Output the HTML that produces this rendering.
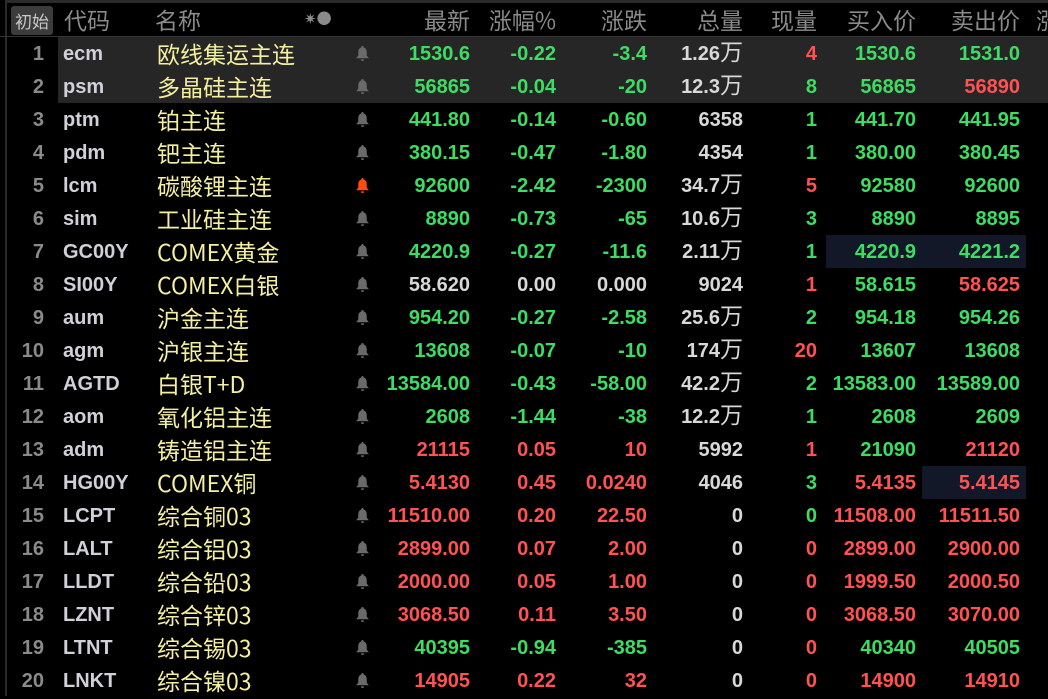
<!DOCTYPE html>
<html><head><meta charset="utf-8"><style>
body{margin:0;width:1048px;height:696px;background:#000;overflow:hidden;font-family:"Liberation Sans","Noto Sans CJK SC",sans-serif;position:relative}
.top{position:absolute;left:6px;top:0;width:1042px;height:3px;background:#2a2a2a}
.lb{position:absolute;left:5px;top:0;width:2px;height:696px;background:#2a2a2a}
.hd{position:absolute;left:0;top:3px;width:1048px;height:32px;color:#8a8a8a;font-size:23px;line-height:32px;font-family:"Noto Sans CJK SC",sans-serif}
.hl{position:absolute;top:36px;left:0;width:1048px;height:1px;background:#333}
.btn{position:absolute;left:11px;top:3px;width:42px;height:29px;background:#3c3c3c;border-radius:3px;color:#c8c8c8;font-size:17px;line-height:29px;text-align:center}
.hd span,.row span{position:absolute;white-space:nowrap}
.row{position:absolute;left:0;width:1048px;height:33px;line-height:35px;font-size:20px;font-weight:bold}
.sel{background:#262626;position:absolute;left:58px;width:990px;height:66px;top:37px}
.n{right:1004px;color:#8a8a8a;font-weight:bold}
.c{left:63px;color:#d0d0d8}
.m{left:157px;color:#f5f0a0;font-size:23px;font-weight:normal;font-family:"Noto Sans CJK SC",sans-serif;line-height:33px}
.b{position:absolute;left:355px;top:8px}
.p{right:578px}.z{right:492px}.d{right:401px}.v{right:305px;color:#d8d8d8}.x{right:231px}.bi{right:132px}.as{right:28px}
.v small{font-size:23px;font-weight:normal;font-family:"Noto Sans CJK SC",sans-serif;line-height:0}
.g{color:#3ddc63}.r{color:#ff5252}.w{color:#d8d8d8}
.hb{position:absolute;background:#121828;height:33px}
</style></head><body>
<div class="top"></div><div class="lb"></div>
<div class="hd"><div class="btn">初始</div>
<span style="left:64px;top:0">代码</span><span style="left:155px">名称</span>
<span style="left:304px;font-size:15px;top:0">✷●</span>
<span style="right:578px">最新</span><span style="right:492px">涨幅%</span><span style="right:401px">涨跌</span><span style="right:305px">总量</span><span style="right:231px">现量</span><span style="right:132px">买入价</span><span style="right:28px">卖出价</span><span style="left:1036px">涨</span></div>
<div class="hl"></div>
<div class="sel"></div>
<div class="hb" style="left:826px;width:200px;top:235px"></div>
<div class="hb" style="left:922px;width:104px;top:466px"></div>
<svg width="0" height="0" style="position:absolute"><defs><symbol id="bell" viewBox="0 0 14 16"><path d="M7 1a1 1 0 0 1 1 1.2C10.5 3 11 5 11 7.5V10l2 2.5H1L3 10V7.5C3 5 3.5 3 6 2.2A1 1 0 0 1 7 1z M5.5 13.5h3a1.5 1.5 0 0 1-3 0z"/></symbol></defs></svg>

<div class="row" style="top:37px"><span class="n">1</span><span class="c">ecm</span><span class="m">欧线集运主连</span><svg class="b" width="15" height="17" fill="#6a6a6a"><use href="#bell"/></svg><span class="p g">1530.6</span><span class="z g">-0.22</span><span class="d g">-3.4</span><span class="v">1.26<small>万</small></span><span class="x r">4</span><span class="bi g">1530.6</span><span class="as g">1531.0</span></div>
<div class="row" style="top:70px"><span class="n">2</span><span class="c">psm</span><span class="m">多晶硅主连</span><svg class="b" width="15" height="17" fill="#6a6a6a"><use href="#bell"/></svg><span class="p g">56865</span><span class="z g">-0.04</span><span class="d g">-20</span><span class="v">12.3<small>万</small></span><span class="x g">8</span><span class="bi g">56865</span><span class="as r">56890</span></div>
<div class="row" style="top:103px"><span class="n">3</span><span class="c">ptm</span><span class="m">铂主连</span><svg class="b" width="15" height="17" fill="#6a6a6a"><use href="#bell"/></svg><span class="p g">441.80</span><span class="z g">-0.14</span><span class="d g">-0.60</span><span class="v">6358</span><span class="x g">1</span><span class="bi g">441.70</span><span class="as g">441.95</span></div>
<div class="row" style="top:136px"><span class="n">4</span><span class="c">pdm</span><span class="m">钯主连</span><svg class="b" width="15" height="17" fill="#6a6a6a"><use href="#bell"/></svg><span class="p g">380.15</span><span class="z g">-0.47</span><span class="d g">-1.80</span><span class="v">4354</span><span class="x g">1</span><span class="bi g">380.00</span><span class="as g">380.45</span></div>
<div class="row" style="top:169px"><span class="n">5</span><span class="c">lcm</span><span class="m">碳酸锂主连</span><svg class="b" width="15" height="17" fill="#ff4a10"><use href="#bell"/></svg><span class="p g">92600</span><span class="z g">-2.42</span><span class="d g">-2300</span><span class="v">34.7<small>万</small></span><span class="x r">5</span><span class="bi g">92580</span><span class="as g">92600</span></div>
<div class="row" style="top:202px"><span class="n">6</span><span class="c">sim</span><span class="m">工业硅主连</span><svg class="b" width="15" height="17" fill="#6a6a6a"><use href="#bell"/></svg><span class="p g">8890</span><span class="z g">-0.73</span><span class="d g">-65</span><span class="v">10.6<small>万</small></span><span class="x g">3</span><span class="bi g">8890</span><span class="as g">8895</span></div>
<div class="row" style="top:235px"><span class="n">7</span><span class="c">GC00Y</span><span class="m">COMEX黄金</span><svg class="b" width="15" height="17" fill="#6a6a6a"><use href="#bell"/></svg><span class="p g">4220.9</span><span class="z g">-0.27</span><span class="d g">-11.6</span><span class="v">2.11<small>万</small></span><span class="x g">1</span><span class="bi g">4220.9</span><span class="as g">4221.2</span></div>
<div class="row" style="top:268px"><span class="n">8</span><span class="c">SI00Y</span><span class="m">COMEX白银</span><svg class="b" width="15" height="17" fill="#6a6a6a"><use href="#bell"/></svg><span class="p w">58.620</span><span class="z w">0.00</span><span class="d w">0.000</span><span class="v">9024</span><span class="x r">1</span><span class="bi g">58.615</span><span class="as r">58.625</span></div>
<div class="row" style="top:301px"><span class="n">9</span><span class="c">aum</span><span class="m">沪金主连</span><svg class="b" width="15" height="17" fill="#6a6a6a"><use href="#bell"/></svg><span class="p g">954.20</span><span class="z g">-0.27</span><span class="d g">-2.58</span><span class="v">25.6<small>万</small></span><span class="x g">2</span><span class="bi g">954.18</span><span class="as g">954.26</span></div>
<div class="row" style="top:334px"><span class="n">10</span><span class="c">agm</span><span class="m">沪银主连</span><svg class="b" width="15" height="17" fill="#6a6a6a"><use href="#bell"/></svg><span class="p g">13608</span><span class="z g">-0.07</span><span class="d g">-10</span><span class="v">174<small>万</small></span><span class="x r">20</span><span class="bi g">13607</span><span class="as g">13608</span></div>
<div class="row" style="top:367px"><span class="n">11</span><span class="c">AGTD</span><span class="m">白银T+D</span><svg class="b" width="15" height="17" fill="#6a6a6a"><use href="#bell"/></svg><span class="p g">13584.00</span><span class="z g">-0.43</span><span class="d g">-58.00</span><span class="v">42.2<small>万</small></span><span class="x g">2</span><span class="bi g">13583.00</span><span class="as g">13589.00</span></div>
<div class="row" style="top:400px"><span class="n">12</span><span class="c">aom</span><span class="m">氧化铝主连</span><svg class="b" width="15" height="17" fill="#6a6a6a"><use href="#bell"/></svg><span class="p g">2608</span><span class="z g">-1.44</span><span class="d g">-38</span><span class="v">12.2<small>万</small></span><span class="x g">1</span><span class="bi g">2608</span><span class="as g">2609</span></div>
<div class="row" style="top:433px"><span class="n">13</span><span class="c">adm</span><span class="m">铸造铝主连</span><svg class="b" width="15" height="17" fill="#6a6a6a"><use href="#bell"/></svg><span class="p r">21115</span><span class="z r">0.05</span><span class="d r">10</span><span class="v">5992</span><span class="x r">1</span><span class="bi g">21090</span><span class="as r">21120</span></div>
<div class="row" style="top:466px"><span class="n">14</span><span class="c">HG00Y</span><span class="m">COMEX铜</span><svg class="b" width="15" height="17" fill="#6a6a6a"><use href="#bell"/></svg><span class="p r">5.4130</span><span class="z r">0.45</span><span class="d r">0.0240</span><span class="v">4046</span><span class="x g">3</span><span class="bi r">5.4135</span><span class="as r">5.4145</span></div>
<div class="row" style="top:499px"><span class="n">15</span><span class="c">LCPT</span><span class="m">综合铜03</span><svg class="b" width="15" height="17" fill="#6a6a6a"><use href="#bell"/></svg><span class="p r">11510.00</span><span class="z r">0.20</span><span class="d r">22.50</span><span class="v">0</span><span class="x g">0</span><span class="bi r">11508.00</span><span class="as r">11511.50</span></div>
<div class="row" style="top:532px"><span class="n">16</span><span class="c">LALT</span><span class="m">综合铝03</span><svg class="b" width="15" height="17" fill="#6a6a6a"><use href="#bell"/></svg><span class="p r">2899.00</span><span class="z r">0.07</span><span class="d r">2.00</span><span class="v">0</span><span class="x r">0</span><span class="bi r">2899.00</span><span class="as r">2900.00</span></div>
<div class="row" style="top:565px"><span class="n">17</span><span class="c">LLDT</span><span class="m">综合铅03</span><svg class="b" width="15" height="17" fill="#6a6a6a"><use href="#bell"/></svg><span class="p r">2000.00</span><span class="z r">0.05</span><span class="d r">1.00</span><span class="v">0</span><span class="x r">0</span><span class="bi r">1999.50</span><span class="as r">2000.50</span></div>
<div class="row" style="top:598px"><span class="n">18</span><span class="c">LZNT</span><span class="m">综合锌03</span><svg class="b" width="15" height="17" fill="#6a6a6a"><use href="#bell"/></svg><span class="p r">3068.50</span><span class="z r">0.11</span><span class="d r">3.50</span><span class="v">0</span><span class="x r">0</span><span class="bi r">3068.50</span><span class="as r">3070.00</span></div>
<div class="row" style="top:631px"><span class="n">19</span><span class="c">LTNT</span><span class="m">综合锡03</span><svg class="b" width="15" height="17" fill="#6a6a6a"><use href="#bell"/></svg><span class="p g">40395</span><span class="z g">-0.94</span><span class="d g">-385</span><span class="v">0</span><span class="x r">0</span><span class="bi g">40340</span><span class="as g">40505</span></div>
<div class="row" style="top:664px"><span class="n">20</span><span class="c">LNKT</span><span class="m">综合镍03</span><svg class="b" width="15" height="17" fill="#6a6a6a"><use href="#bell"/></svg><span class="p r">14905</span><span class="z r">0.22</span><span class="d r">32</span><span class="v">0</span><span class="x r">0</span><span class="bi r">14900</span><span class="as r">14910</span></div>
</body></html>
